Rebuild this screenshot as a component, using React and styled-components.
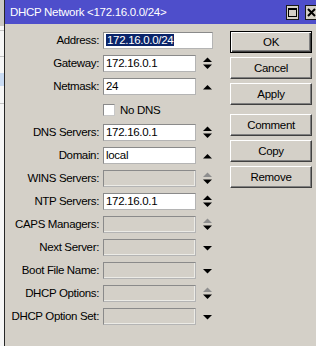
import React from "react";
import styled, { createGlobalStyle } from "styled-components";

const GlobalStyle = createGlobalStyle`
  html, body { margin: 0; padding: 0; background: #f4f4f4; }
  body { font-family: "Liberation Sans", Arial, sans-serif; font-size: 11.5px; color: #000; }
`;

const Page = styled.div`
  display: flex;
  height: 346px;
  width: 316px;
  overflow: hidden;
`;

const BackStrip = styled.div`
  width: 4px;
  flex: none;
  display: flex;
  flex-direction: column;
  background: #f6f6f6;
`;

const StripCell = styled.div`
  height: ${(p) => p.$h}px;
  flex: none;
  background: ${(p) => p.$bg || "transparent"};
  border-bottom: ${(p) => (p.$line ? "1px solid #c4c4c4" : "none")};
`;

const Window = styled.div`
  flex: 1;
  display: flex;
  flex-direction: column;
  background: #d4d0c8;
  border-left: 1px solid #262626;
  min-width: 0;
`;

const TitleBar = styled.div`
  height: 24px;
  flex: none;
  display: flex;
  align-items: center;
  justify-content: space-between;
  background: #4e4ecb;
  padding-left: 5px;
`;

const TitleText = styled.span`
  color: #fff;
  font-size: 11.5px;
  letter-spacing: -0.3px;
  white-space: nowrap;
`;

const TitleButtons = styled.div`
  display: flex;
  gap: 6px;
  margin-right: -2px;
`;

const TitleButton = styled.div`
  width: 11px;
  height: 13px;
  background: #d4d0c8;
  border: 1px solid #1a1a1a;
  display: flex;
  align-items: center;
  justify-content: center;
`;

const Content = styled.div`
  display: flex;
  gap: 12px;
  padding-top: 8px;
`;

const Form = styled.div`
  display: grid;
  grid-template-columns: 98px 93px 22px;
  grid-auto-rows: 17px;
  row-gap: 6px;
`;

const Label = styled.div`
  text-align: right;
  padding-right: 4px;
  line-height: 17px;
  white-space: nowrap;
  letter-spacing: -0.35px;
`;

const Field = styled.div`
  box-sizing: border-box;
  height: 17px;
  width: ${(p) => (p.$wide ? "110px" : "93px")};
  grid-column: ${(p) => (p.$wide ? "span 2" : "auto")};
  background: ${(p) => (p.$disabled ? "#d4d0c8" : "#fff")};
  border: 1px solid #8a8a8a;
  border-right-color: #b4b4b4;
  border-bottom-color: #b4b4b4;
  box-shadow: ${(p) => (p.$disabled ? "inset -1px -1px 0 #ecebe6" : "none")};
  padding-left: 2px;
  line-height: 15px;
  white-space: nowrap;
  overflow: hidden;
  letter-spacing: -0.3px;
`;

const Selected = styled.span`
  background: #0a246a;
  color: #fff;
  padding: 0 1px;
`;

const SpinCell = styled.div`
  display: flex;
  align-items: center;
  justify-content: center;
`;

const CheckRow = styled.div`
  grid-column: 2 / span 2;
  display: flex;
  align-items: center;
  gap: 5px;
  letter-spacing: -0.3px;
`;

const CheckBox = styled.div`
  box-sizing: border-box;
  width: 12px;
  height: 12px;
  background: #fff;
  border: 1px solid #8a8a8a;
  border-right-color: #c8c8c8;
  border-bottom-color: #c8c8c8;
`;

const ButtonColumn = styled.div`
  display: flex;
  flex-direction: column;
  gap: 4px;
  width: 82px;
  margin-top: -1px;
`;

const Button = styled.div`
  box-sizing: border-box;
  height: 22px;
  display: flex;
  align-items: center;
  justify-content: center;
  background: #d4d0c8;
  margin-top: ${(p) => (p.$spaced ? "5px" : "0")};
  border: 1px solid;
  border-color: ${(p) => (p.$default ? "#000" : "#fff #404040 #404040 #fff")};
  box-shadow: ${(p) =>
    p.$default
      ? "inset 1px 1px 0 #fff, inset -1px -1px 0 #404040, inset -2px -2px 0 #808080"
      : "inset -1px -1px 0 #808080"};
  letter-spacing: -0.3px;
`;

const Spinner = ({ up, down }) => (
  <svg width="11" height="13" viewBox="0 0 11 13">
    {up && <polygon points="1,5 5.5,0.5 10,5" fill={up === "gray" ? "#8e8e8e" : "#000"} />}
    {down && <polygon points="1,7.5 10,7.5 5.5,12" fill="#000" />}
  </svg>
);

const SingleArrow = ({ dir }) => (
  <svg width="11" height="6" viewBox="0 0 11 6">
    {dir === "up" ? (
      <polygon points="1,5.5 5.5,1 10,5.5" fill="#000" />
    ) : (
      <polygon points="1,1 10,1 5.5,5.5" fill="#000" />
    )}
  </svg>
);

const rows = [
  { label: "Gateway:", value: "172.16.0.1", up: "black", down: true },
  { label: "Netmask:", value: "24", single: "up" },
];

const rows2 = [
  { label: "DNS Servers:", value: "172.16.0.1", up: "black", down: true },
  { label: "Domain:", value: "local", single: "up" },
  { label: "WINS Servers:", disabled: true, up: "gray", down: true },
  { label: "NTP Servers:", value: "172.16.0.1", up: "black", down: true },
  { label: "CAPS Managers:", disabled: true, up: "gray", down: true },
  { label: "Next Server:", disabled: true, single: "down" },
  { label: "Boot File Name:", disabled: true, single: "down" },
  { label: "DHCP Options:", disabled: true, up: "gray", down: true },
  { label: "DHCP Option Set:", disabled: true, single: "down" },
];

const Row = ({ r }) => (
  <>
    <Label>{r.label}</Label>
    <Field $disabled={r.disabled}>{r.value || ""}</Field>
    <SpinCell>
      {r.single ? <SingleArrow dir={r.single} /> : <Spinner up={r.up} down={r.down} />}
    </SpinCell>
  </>
);

export default function App() {
  return (
    <>
      <GlobalStyle />
      <Page>
        <BackStrip>
          <StripCell $h={26} $bg="#cbc9c4" />
          <StripCell $h={4} $line />
          <StripCell $h={25} $line />
          <StripCell $h={16} />
          <StripCell $h={13} $bg="#c9dbf3" />
          <StripCell $h={17} $line />
        </BackStrip>
        <Window>
          <TitleBar>
            <TitleText>DHCP Network &lt;172.16.0.0/24&gt;</TitleText>
            <TitleButtons>
              <TitleButton>
                <svg width="9" height="9" viewBox="0 0 9 9">
                  <rect x="0.5" y="0.5" width="8" height="8" fill="none" stroke="#000" />
                  <rect x="0" y="0" width="9" height="2" fill="#000" />
                </svg>
              </TitleButton>
              <TitleButton>
                <svg width="9" height="9" viewBox="0 0 9 9">
                  <path d="M1 1 L8 8 M8 1 L1 8" stroke="#000" strokeWidth="2" />
                </svg>
              </TitleButton>
            </TitleButtons>
          </TitleBar>
          <Content>
            <Form>
              <Label>Address:</Label>
              <Field $wide>
                <Selected>172.16.0.0/24</Selected>
              </Field>
              {rows.map((r) => (
                <Row key={r.label} r={r} />
              ))}
              <Label />
              <CheckRow>
                <CheckBox />
                <span>No DNS</span>
              </CheckRow>
              {rows2.map((r) => (
                <Row key={r.label} r={r} />
              ))}
            </Form>
            <ButtonColumn>
              <Button $default>OK</Button>
              <Button>Cancel</Button>
              <Button>Apply</Button>
              <Button $spaced>Comment</Button>
              <Button>Copy</Button>
              <Button>Remove</Button>
            </ButtonColumn>
          </Content>
        </Window>
      </Page>
    </>
  );
}
